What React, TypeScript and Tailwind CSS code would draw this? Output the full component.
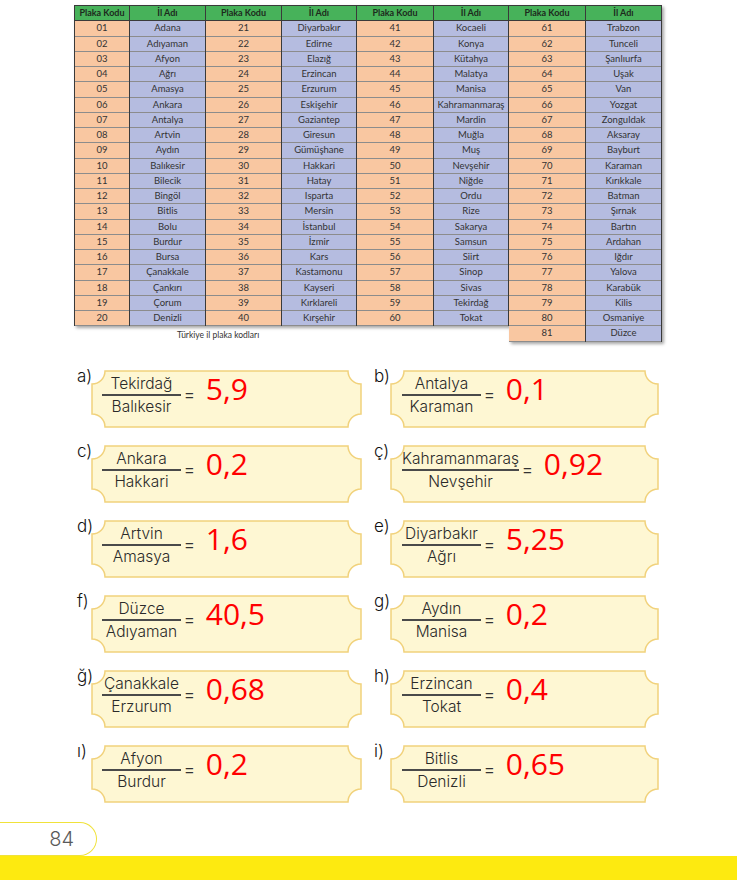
import React from 'react';

const names: string[] = [
  'Adana', 'Adıyaman', 'Afyon', 'Ağrı', 'Amasya', 'Ankara', 'Antalya', 'Artvin', 'Aydın', 'Balıkesir',
  'Bilecik', 'Bingöl', 'Bitlis', 'Bolu', 'Burdur', 'Bursa', 'Çanakkale', 'Çankırı', 'Çorum', 'Denizli',
  'Diyarbakır', 'Edirne', 'Elazığ', 'Erzincan', 'Erzurum', 'Eskişehir', 'Gaziantep', 'Giresun', 'Gümüşhane', 'Hakkari',
  'Hatay', 'Isparta', 'Mersin', 'İstanbul', 'İzmir', 'Kars', 'Kastamonu', 'Kayseri', 'Kırklareli', 'Kırşehir',
  'Kocaeli', 'Konya', 'Kütahya', 'Malatya', 'Manisa', 'Kahramanmaraş', 'Mardin', 'Muğla', 'Muş', 'Nevşehir',
  'Niğde', 'Ordu', 'Rize', 'Sakarya', 'Samsun', 'Siirt', 'Sinop', 'Sivas', 'Tekirdağ', 'Tokat',
  'Trabzon', 'Tunceli', 'Şanlıurfa', 'Uşak', 'Van', 'Yozgat', 'Zonguldak', 'Aksaray', 'Bayburt', 'Karaman',
  'Kırıkkale', 'Batman', 'Şırnak', 'Bartın', 'Ardahan', 'Iğdır', 'Yalova', 'Karabük', 'Kilis', 'Osmaniye',
  'Düzce',
];

const pairs = [
  { start: 0, count: 20, codeW: 'w-[55px]', nameW: 'w-[76px]' },
  { start: 20, count: 20, codeW: 'w-[76px]', nameW: 'w-[75px]' },
  { start: 40, count: 20, codeW: 'w-[77px]', nameW: 'w-[75px]' },
];

const questions = [
  { l: 'a)', top: 'Tekirdağ', bottom: 'Balıkesir', ans: '5,9' },
  { l: 'b)', top: 'Antalya', bottom: 'Karaman', ans: '0,1' },
  { l: 'c)', top: 'Ankara', bottom: 'Hakkari', ans: '0,2' },
  { l: 'ç)', top: 'Kahramanmaraş', bottom: 'Nevşehir', ans: '0,92' },
  { l: 'd)', top: 'Artvin', bottom: 'Amasya', ans: '1,6' },
  { l: 'e)', top: 'Diyarbakır', bottom: 'Ağrı', ans: '5,25' },
  { l: 'f)', top: 'Düzce', bottom: 'Adıyaman', ans: '40,5' },
  { l: 'g)', top: 'Aydın', bottom: 'Manisa', ans: '0,2' },
  { l: 'ğ)', top: 'Çanakkale', bottom: 'Erzurum', ans: '0,68' },
  { l: 'h)', top: 'Erzincan', bottom: 'Tokat', ans: '0,4' },
  { l: 'ı)', top: 'Afyon', bottom: 'Burdur', ans: '0,2' },
  { l: 'i)', top: 'Bitlis', bottom: 'Denizli', ans: '0,65' },
];

const pad = (n: number) => (n < 10 ? '0' + n : String(n));

function Column({ head, items, w, color }: { head: string; items: string[]; w: string; color: string }) {
  return (
    <div className={`${w} flex flex-col border-r border-[#3a3a3a]`}>
      <div className="h-[15.25px] bg-[#47b25a] border-b border-[#3a3a3a] flex items-center justify-center text-[9px] font-bold text-[#1d2a1d]">
        {head}
      </div>
      {items.map((t) => (
        <div key={t} className={`h-[15.25px] ${color} border-b border-[#8c8c8c] flex items-center justify-center text-[9.5px] text-[#333]`}>
          {t}
        </div>
      ))}
    </div>
  );
}

function Shape({ w, h }: { w: number; h: number }) {
  const r = 13;
  const x0 = 1, y0 = 1, x1 = w - 1, y1 = h - 1;
  const d = `M${x0 + r},${y0} H${x1 - r} A${r},${r} 0 0 0 ${x1},${y0 + r} V${y1 - r} A${r},${r} 0 0 0 ${x1 - r},${y1} H${x0 + r} A${r},${r} 0 0 0 ${x0},${y1 - r} V${y0 + r} A${r},${r} 0 0 0 ${x0 + r},${y0} Z`;
  return (
    <svg width={w} height={h} className="absolute inset-0">
      <path d={d} fill="#fef7d3" stroke="#f1d27c" strokeWidth="1.5" />
    </svg>
  );
}

function Question({ q, right }: { q: (typeof questions)[number]; right: boolean }) {
  const w = right ? 269 : 271;
  return (
    <div className="flex items-start">
      <span className={`${right ? 'w-[16px]' : 'w-[14px]'} -mt-[6px] text-[17px] text-[#111] font-['Inter',sans-serif] font-light`}>{q.l}</span>
      <div className={`relative ${right ? 'w-[269px] pl-[10px]' : 'w-[271px] pl-[9px]'} h-[58px] pt-[4px]`}>
        <Shape w={w} h={58} />
        <div className="relative flex items-start">
          <div className="flex flex-col items-center min-w-[83px] px-[2px] font-['Inter',sans-serif] font-light text-[15.5px] text-[#2a2a2a]">
            <span className="h-[20px] leading-[20px]">{q.top}</span>
            <span className="w-full h-[1.5px] bg-[#4a4a4a]" />
            <span className="h-[20px] leading-[21px]">{q.bottom}</span>
          </div>
          <span className="mt-[14px] ml-[2px] text-[15px] leading-[15px] text-[#333] font-['Liberation_Sans',sans-serif]">=</span>
          <span className="ml-[12px] -mt-[1px] text-[30px] leading-[32px] text-[#ff0000] font-['Open_Sans',sans-serif]">{q.ans}</span>
        </div>
      </div>
    </div>
  );
}

export default function App() {
  return (
    <div className="w-[737px] h-[880px] bg-white flex flex-col overflow-hidden font-['Lato',sans-serif]">
      <div className="h-[370px] pt-[5px] pl-[74px] flex items-start">
        <div className="flex flex-col">
          <div className="flex border-l border-t border-[#3a3a3a] shadow-[2px_2px_3px_rgba(0,0,0,0.35)]">
            {pairs.map((p) => (
              <React.Fragment key={p.start}>
                <Column
                  head="Plaka Kodu"
                  w={p.codeW}
                  color="bg-[#f9c7a1]"
                  items={names.slice(p.start, p.start + p.count).map((_, i) => pad(p.start + i + 1))}
                />
                <Column head="İl Adı" w={p.nameW} color="bg-[#b5bce0]" items={names.slice(p.start, p.start + p.count)} />
              </React.Fragment>
            ))}
          </div>
          <p className="ml-[103px] mt-[3px] text-[8.5px] text-[#333]">Türkiye il plaka kodları</p>
        </div>
        <div className="flex border-t border-[#3a3a3a] shadow-[2px_2px_3px_rgba(0,0,0,0.35)]">
          <Column head="Plaka Kodu" w="w-[77px]" color="bg-[#f9c7a1]" items={names.slice(60).map((_, i) => String(61 + i))} />
          <Column head="İl Adı" w="w-[76px]" color="bg-[#b5bce0]" items={names.slice(60)} />
        </div>
      </div>

      <div className="pl-[77px] grid grid-cols-[285px_285px] gap-x-[12px] gap-y-[17px]">
        {questions.map((q, i) => (
          <Question key={q.l} q={q} right={i % 2 === 1} />
        ))}
      </div>

      <div className="mt-[19px] w-[97px] h-[34px] rounded-r-full border-[1.5px] border-l-0 border-[#f0e23a] flex items-center justify-end pr-[22px]">
        <span className="text-[20px] text-[#5a5a5a] font-['Inter',sans-serif] font-light">84</span>
      </div>
      <div className="flex-1 bg-[#fdea10]" />
    </div>
  );
}
